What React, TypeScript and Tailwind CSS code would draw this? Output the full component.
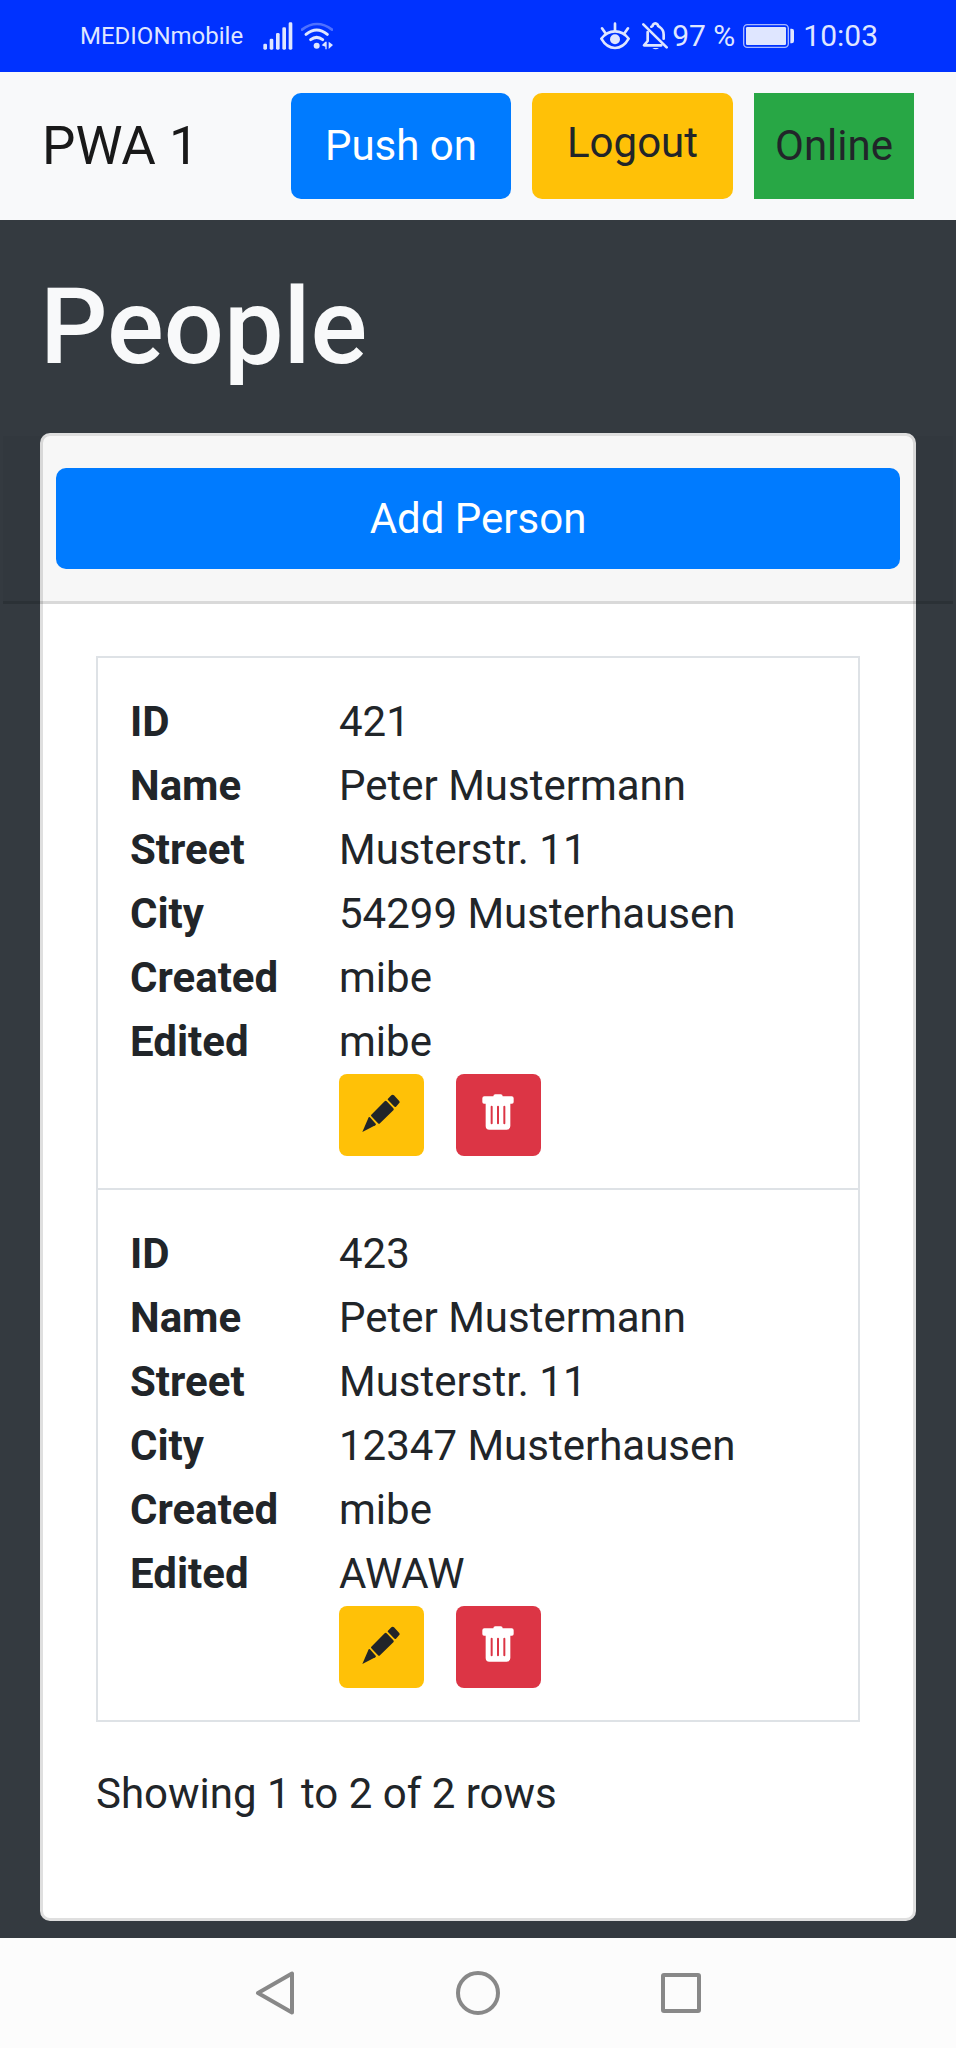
import React from 'react';

type Person = {
  id: number;
  name: string;
  street: string;
  city: string;
  created: string;
  edited: string;
};

const people: Person[] = [
  { id: 421, name: 'Peter Mustermann', street: 'Musterstr. 11', city: '54299 Musterhausen', created: 'mibe', edited: 'mibe' },
  { id: 423, name: 'Peter Mustermann', street: 'Musterstr. 11', city: '12347 Musterhausen', created: 'mibe', edited: 'AWAW' },
];

function SignalIcon() {
  return (
    <svg className="h-7 w-[30px]" viewBox="0 0 90 84" fill="currentColor" aria-hidden="true">
      <rect x="1" y="65" width="11" height="18" rx="4" />
      <rect x="20" y="50" width="11" height="33" rx="4" />
      <rect x="39" y="33" width="11" height="50" rx="4" />
      <rect x="58" y="16" width="11" height="67" rx="4" />
      <rect x="77" y="1" width="11" height="82" rx="4" />
    </svg>
  );
}

function WifiIcon() {
  return (
    <svg className="h-7 w-8" viewBox="0 0 96 84" fill="none" stroke="currentColor" aria-hidden="true">
      <path d="M3 23Q48-11 93 23" strokeWidth="8" strokeLinecap="round" opacity=".35" />
      <path d="M15 37Q47 11 79 37" strokeWidth="9" strokeLinecap="round" />
      <path d="M29 53Q47 39 65 53" strokeWidth="9" strokeLinecap="round" />
      <circle cx="47" cy="71" r="9" fill="currentColor" stroke="none" />
      <path d="M62 70L73 59h4v23h-4V74zM83 59l13 10-13 12z" fill="currentColor" stroke="none" />
    </svg>
  );
}

function EyeIcon() {
  return (
    <svg className="h-7 w-[30px]" viewBox="0 0 90 84" fill="none" stroke="currentColor" strokeWidth="8" strokeLinecap="round" aria-hidden="true">
      <path d="M4 50Q20 28 45 28T86 50Q70 78 45 78T4 50Z" strokeLinejoin="round" />
      <path d="M45 26V5M16 33L6 19M74 33l10-14" />
      <circle cx="45" cy="52" r="15" fill="currentColor" stroke="none" />
    </svg>
  );
}

function MutedBellIcon() {
  return (
    <svg className="h-7 w-[26px]" viewBox="0 0 78 84" fill="none" stroke="currentColor" strokeWidth="8" strokeLinecap="round" aria-hidden="true">
      <path d="M4 7L74 76" />
      <path d="M17 30V57L6 70H58" strokeLinejoin="round" />
      <path d="M28 14Q33 12 33 8Q40 0 47 8Q47 12 53 15Q65 23 65 38V50" />
      <path d="M31 78H51Q41 86 31 78Z" fill="currentColor" stroke="none" />
    </svg>
  );
}

function BatteryIcon() {
  return (
    <svg className="h-6 w-[52px]" viewBox="0 0 156 72" fill="none" aria-hidden="true">
      <rect x="2" y="2" width="134" height="68" rx="11" stroke="currentColor" strokeWidth="4" opacity=".75" />
      <rect x="9" y="9" width="120" height="54" rx="4" fill="currentColor" />
      <path d="M142 14h4q7 0 7 7v30q0 7-7 7h-4z" fill="currentColor" />
    </svg>
  );
}

function PencilIcon() {
  return (
    <svg className="size-[38px]" viewBox="0 0 114 114" fill="currentColor" aria-hidden="true">
      <path d="M1 114L20 70Q22 68 24 70L41 89Q43 92 40 94Z" />
      <path d="M28 62L68 22Q71 19 74 22L94 43Q97 46 94 49L54 88Q51 91 48 88L28 67Q26 64 28 62Z" />
      <path d="M78 14L88 4Q92 0 96 4L111 20Q115 24 111 28L102 38Q99 40 96 37L78 18Q76 16 78 14Z" />
    </svg>
  );
}

function TrashIcon() {
  return (
    <svg className="size-[38px]" viewBox="0 0 114 114" fill="currentColor" aria-hidden="true">
      <path
        fillRule="evenodd"
        d="M43 7Q43 1 49 1H65Q71 1 71 7H98Q104 7 104 13V24Q104 29 99 29H94V96Q94 107 83 107H31Q20 107 20 96V29H15Q10 29 10 24V13Q10 7 16 7ZM35 38V88Q35 91 38 91T41 88V38Q41 35 38 35T35 38ZM54 38V88Q54 91 57 91T60 88V38Q60 35 57 35T54 38ZM73 38V88Q73 91 76 91T79 88V38Q79 35 76 35T73 38Z"
      />
    </svg>
  );
}

function StatusBar() {
  return (
    <div className="flex h-[72px] items-center justify-between bg-[#0032ff] pr-[78px] pl-20 text-[#dfe6ff]">
      <div className="flex items-center">
        <span className="text-2xl">MEDIONmobile</span>
        <span className="ml-5 flex items-center gap-2">
          <SignalIcon />
          <WifiIcon />
        </span>
      </div>
      <div className="flex items-center text-[30px] leading-9">
        <EyeIcon />
        <span className="ml-3">
          <MutedBellIcon />
        </span>
        <span className="ml-1">97 %</span>
        <span className="mx-2">
          <BatteryIcon />
        </span>
        <span>10:03</span>
      </div>
    </div>
  );
}

function Field({ label, value }: { label: string; value: string | number }) {
  return (
    <div className="flex">
      <dt className="w-[209px] shrink-0 font-bold">{label}</dt>
      <dd>{value}</dd>
    </div>
  );
}

function PersonRow({ person }: { person: Person }) {
  return (
    <tr>
      <td className="border-2 border-[#dee2e6] p-8">
        <dl>
          <Field label="ID" value={person.id} />
          <Field label="Name" value={person.name} />
          <Field label="Street" value={person.street} />
          <Field label="City" value={person.city} />
          <Field label="Created" value={person.created} />
          <Field label="Edited" value={person.edited} />
        </dl>
        <div className="ml-[209px] flex gap-8">
          <button type="button" aria-label="Edit" className="flex h-[82px] w-[85px] items-center justify-center rounded-lg bg-[#ffc107] pr-px pb-1 text-[#212529]">
            <PencilIcon />
          </button>
          <button type="button" aria-label="Delete" className="flex h-[82px] w-[85px] items-center justify-center rounded-lg bg-[#dc3545] pr-px pb-1 text-white">
            <TrashIcon />
          </button>
        </div>
      </td>
    </tr>
  );
}

export default function App() {
  return (
    <div className="flex min-h-screen flex-col bg-[#343a40] font-[Roboto,sans-serif] text-[42px] leading-[64px] text-[#212529]">
      <StatusBar />

      <nav className="flex items-stretch justify-between bg-[#f8f9fa] px-[42px] py-[21px]">
        <a href="#" className="self-center text-[53px] text-black/90">
          PWA 1
        </a>
        <div className="flex gap-[21px]">
          <button type="button" className="rounded-[10px] bg-[#007bff] px-[34px] py-[21px] text-white">
            Push on
          </button>
          <a href="#" className="rounded-[10px] bg-[#ffc107] px-[35px] pt-[18px]">
            Logout
          </a>
          <div className="bg-[#28a745] px-[21px] py-[21px]">Online</div>
        </div>
      </nav>

      <main className="flex grow flex-col overflow-hidden px-10 pb-[17px]">
        <h1 className="mt-11 mb-[42px] text-[106px] leading-[127px] font-medium text-[#f8f9fa]">People</h1>

        <section className="grow rounded-[10px] border-[3px] border-[#dfdfdf] bg-white">
          <div className="-mx-10 border-b-[3px] border-black/12 bg-black/3 px-[53px] py-8">
            <button type="button" className="h-[101px] w-full rounded-[10px] bg-[#007bff] text-white">
              Add Person
            </button>
          </div>
          <div className="px-[53px] pt-[52px] pb-[92px]">
            <table className="w-full border-collapse">
              <tbody>
                {people.map((person) => (
                  <PersonRow key={person.id} person={person} />
                ))}
              </tbody>
            </table>
            <p className="mt-10">Showing 1 to 2 of 2 rows</p>
          </div>
        </section>
      </main>

      <footer className="flex h-[110px] items-center justify-center gap-[159px] bg-[#fcfcfc] text-[#888888]">
        <button type="button" aria-label="Back" className="size-11">
          <svg viewBox="0 0 44 44" fill="none" stroke="currentColor" strokeWidth="4" strokeLinejoin="round" aria-hidden="true">
            <path d="M39 2.5V41.5L5 22Z" />
          </svg>
        </button>
        <button type="button" aria-label="Home" className="size-11">
          <svg viewBox="0 0 44 44" fill="none" stroke="currentColor" strokeWidth="4" aria-hidden="true">
            <circle cx="22" cy="22" r="20" />
          </svg>
        </button>
        <button type="button" aria-label="Recent apps" className="size-11">
          <svg viewBox="0 0 44 44" fill="none" stroke="currentColor" strokeWidth="4" strokeLinejoin="round" aria-hidden="true">
            <rect x="4" y="4" width="36" height="36" rx="1" />
          </svg>
        </button>
      </footer>
    </div>
  );
}
